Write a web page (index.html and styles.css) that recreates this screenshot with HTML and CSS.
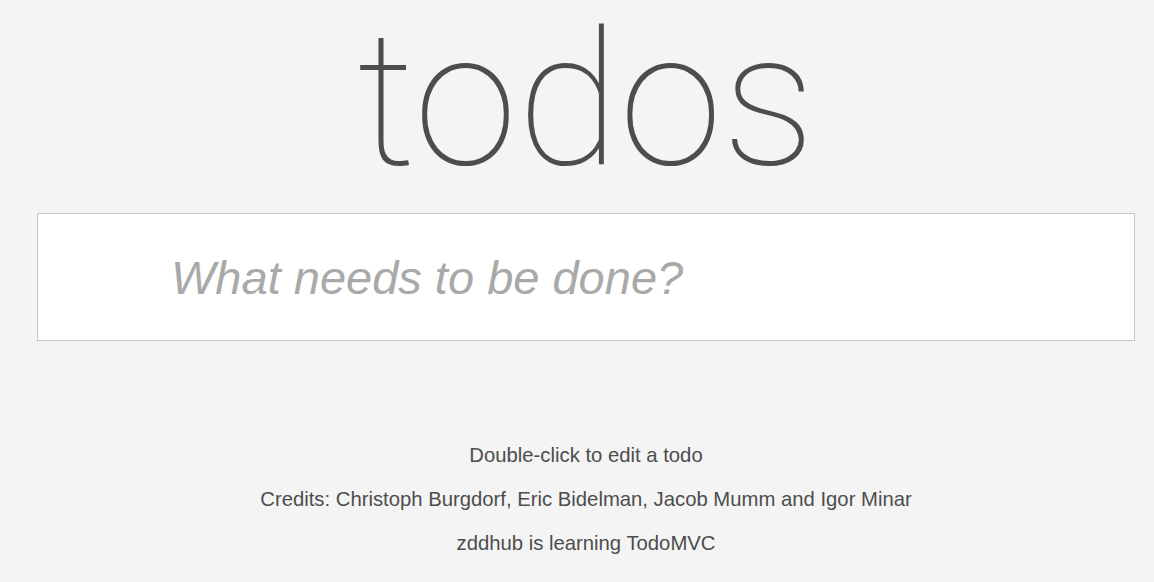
FILE: index.html
```html
<!DOCTYPE html>
<html lang="en">
<head>
<meta charset="utf-8">
<title>todos</title>
<link rel="stylesheet" href="styles.css">
</head>
<body>
<section class="app">
  <header class="header">
    <h1 class="title">todos</h1>
    <input class="new-todo" placeholder="What needs to be done?">
  </header>
</section>
<footer class="info">
  <p>Double-click to edit a todo</p>
  <p>Credits: Christoph Burgdorf, Eric Bidelman, Jacob Mumm and Igor Minar</p>
  <p>zddhub is learning TodoMVC</p>
</footer>
</body>
</html>
```
FILE: styles.css
```css
html, body {
  margin: 0;
  padding: 0;
}
body {
  background: #f4f4f4;
  color: #4d4d4d;
  font-family: "Liberation Sans", Arial, sans-serif;
}
.app {
  padding: 0 19px 0 37px;
}
.header {
  display: flex;
  flex-direction: column;
}
.title {
  margin: 0;
  height: 213px;
  text-align: center;
  font-family: Roboto, "Liberation Sans", sans-serif;
  font-weight: 100;
  font-size: 187px;
  line-height: 202px;
  color: #4d4d4d;
  overflow: visible;
}
.new-todo {
  box-sizing: border-box;
  width: 100%;
  height: 128px;
  margin: 0;
  padding: 0 0 0 133px;
  border: 1px solid #c8c8c8;
  background: #fff;
  font-family: "Liberation Sans", Arial, sans-serif;
  font-size: 47px;
  color: #4d4d4d;
  outline: none;
}
.new-todo::placeholder {
  font-style: italic;
  color: #a9a9a9;
}
.info {
  margin-top: 102px;
  padding: 0 19px 0 37px;
  text-align: center;
  font-size: 20.3px;
  line-height: 24px;
}
.info p {
  margin: 0 0 20px;
}
```
